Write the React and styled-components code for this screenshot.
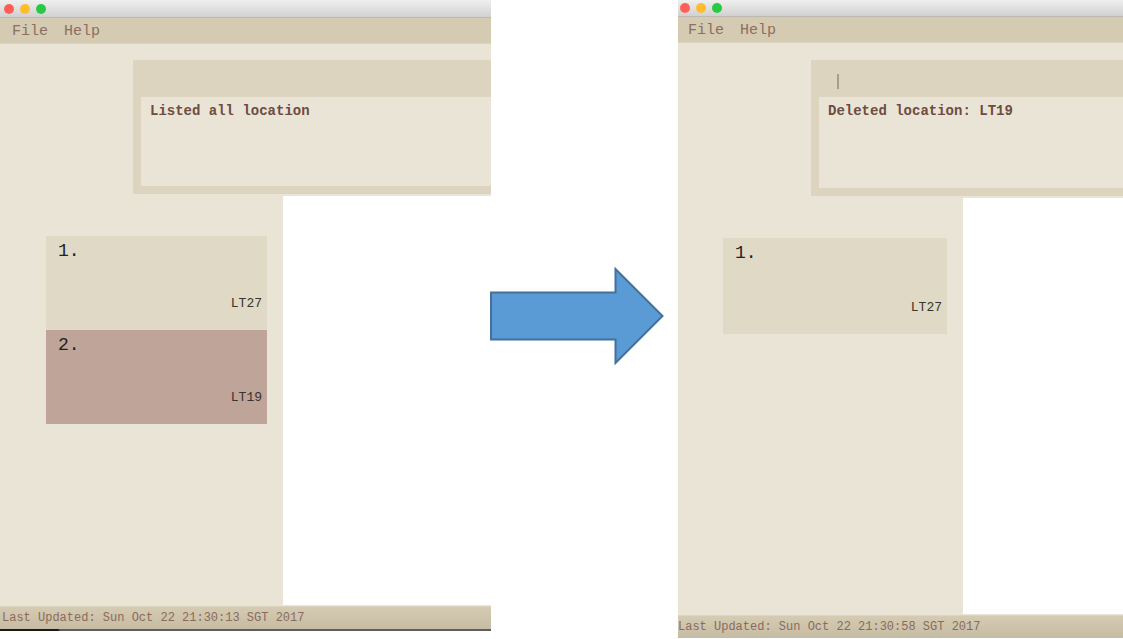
import React from "react";
import styled, { createGlobalStyle } from "styled-components";

const GlobalStyle = createGlobalStyle`
  * { box-sizing: border-box; }
  body {
    margin: 0;
    background: #ffffff;
    font-family: "Liberation Mono", "Courier New", monospace;
  }
  button, input { font: inherit; color: inherit; }
`;

const Page = styled.main`
  display: grid;
  grid-template-columns: minmax(0, 491fr) minmax(0, 187fr) minmax(0, 445fr);
  min-height: 100vh;
`;

const Window = styled.section`
  display: flex;
  flex-direction: column;
  min-width: 0;
  overflow: hidden;
  margin-bottom: ${(p) => p.$gapBelow}px;
  background: #eae4d6;
`;

const TitleBar = styled.header`
  display: flex;
  align-items: center;
  gap: 6px;
  height: ${(p) => p.$height}px;
  padding-left: ${(p) => p.$inset}px;
  background: linear-gradient(#efefef, #d1d1d1);
  border-bottom: 1px solid #bdb9b1;
`;

const Light = styled.button`
  width: 10px;
  height: 10px;
  padding: 0;
  border: 0;
  border-radius: 50%;
  background: ${(p) => p.$color};
`;

const MenuBar = styled.nav`
  display: flex;
  gap: 16px;
  padding: 5px ${(p) => p.$inset}px 2px;
  background: #d5cab2;
  border-bottom: 1px solid #dcd3bf;
`;

const MenuItem = styled.button`
  padding: 0;
  border: 0;
  background: none;
  font-size: 15px;
  line-height: 18px;
  color: #8d6f60;
`;

const CommandPanel = styled.div`
  margin: ${(p) => p.$top}px 0 2px 133px;
  padding: 0 0 8px 8px;
  background: #dcd4bf;
`;

const CommandRow = styled.label`
  display: flex;
  align-items: center;
  height: 37px;
  padding: 6px 0 0 18px;
`;

const Caret = styled.span`
  width: 2px;
  height: 15px;
  background: #b09a8a;
`;

const CommandInput = styled.input`
  flex: 1;
  min-width: 0;
  padding: 0;
  border: 0;
  outline: 0;
  background: transparent;
  font-size: 14px;
  line-height: 16px;
  color: #6d4c41;
`;

const Result = styled.output`
  display: block;
  min-height: ${(p) => p.$height}px;
  padding: 5px 9px;
  background: #eae4d6;
  font-size: 14px;
  font-weight: 700;
  line-height: 18px;
  white-space: nowrap;
  color: #6d4c41;
`;

const Body = styled.div`
  display: flex;
  flex: 1;
`;

const Sidebar = styled.aside`
  flex: none;
  width: ${(p) => p.$width}px;
  padding: 40px 16px 0 ${(p) => p.$inset}px;
`;

const Browser = styled.div`
  flex: 1;
  margin-bottom: 1px;
  background: #ffffff;
`;

const LocationList = styled.ol`
  margin: 0;
  padding: 0;
  list-style: none;
`;

const LocationCard = styled.li`
  display: flex;
  flex-direction: column;
  justify-content: space-between;
  min-height: ${(p) => p.$height}px;
  padding: 3px 5px 18px 12px;
  background: ${(p) => (p.$selected ? "#bea499" : "#e0d9c6")};
`;

const Index = styled.span`
  font-size: 18px;
  line-height: 24px;
  color: #24211f;
`;

const Venue = styled.span`
  align-self: flex-end;
  font-size: 13px;
  line-height: 16px;
  color: #38342f;
`;

const StatusBar = styled.footer`
  padding: 3px 0 3px ${(p) => p.$inset}px;
  background: linear-gradient(#d5cbb2, #c6bca4);
  border-top: 1px solid #ddd4c0;
  font-size: 12px;
  line-height: 16px;
  white-space: nowrap;
  color: #8a6b5b;
`;

const DesktopEdge = styled.div`
  height: 2px;
  background: linear-gradient(90deg, #1c1917 58px, #615c5f 60px);
`;

const ArrowColumn = styled.div`
  display: flex;
  align-items: center;
  padding-bottom: 8px;
`;

const Arrow = styled.svg`
  position: relative;
  z-index: 1;
  flex: none;
  width: 174px;
  height: 98px;
  margin-left: -1px;
`;

const lights = [
  { name: "Close", color: "#ff5f57" },
  { name: "Minimize", color: "#ffbd2e" },
  { name: "Zoom", color: "#28ca41" },
];

function AppWindow({ label, layout, typing, result, locations, updated, edge }) {
  return (
    <Window aria-label={label} $gapBelow={layout.gapBelow}>
      <TitleBar $height={layout.title} $inset={layout.lights}>
        {lights.map((l) => (
          <Light key={l.name} type="button" aria-label={l.name} $color={l.color} />
        ))}
      </TitleBar>
      <MenuBar $inset={layout.menu}>
        <MenuItem type="button">File</MenuItem>
        <MenuItem type="button">Help</MenuItem>
      </MenuBar>
      <CommandPanel $top={layout.panelTop}>
        <CommandRow>
          {typing && <Caret />}
          <CommandInput type="text" aria-label="Command" />
        </CommandRow>
        <Result $height={layout.result}>{result}</Result>
      </CommandPanel>
      <Body>
        <Sidebar $width={layout.sidebar} $inset={layout.listInset}>
          <LocationList>
            {locations.map((l, i) => (
              <LocationCard key={l.venue} $height={layout.card} $selected={l.selected}>
                <Index>{i + 1}.</Index>
                <Venue>{l.venue}</Venue>
              </LocationCard>
            ))}
          </LocationList>
        </Sidebar>
        <Browser />
      </Body>
      <StatusBar $inset={layout.status}>Last Updated: {updated}</StatusBar>
      {edge && <DesktopEdge />}
    </Window>
  );
}

const before = {
  gapBelow: 8,
  title: 18,
  lights: 4,
  menu: 12,
  panelTop: 16,
  result: 89,
  sidebar: 283,
  listInset: 46,
  card: 94,
  status: 2,
};

const after = {
  gapBelow: 1,
  title: 17,
  lights: 2,
  menu: 10,
  panelTop: 17,
  result: 91,
  sidebar: 285,
  listInset: 45,
  card: 96,
  status: 0,
};

export default function App() {
  return (
    <>
      <GlobalStyle />
      <Page>
        <AppWindow
          label="Before"
          layout={before}
          result="Listed all location"
          locations={[{ venue: "LT27" }, { venue: "LT19", selected: true }]}
          updated="Sun Oct 22 21:30:13 SGT 2017"
          edge
        />
        <ArrowColumn>
          <Arrow viewBox="0 0 174 98" aria-hidden="true">
            <path
              d="M1 25.5H125.5V2L172.5 49L125.5 96V72.5H1Z"
              fill="#5b9bd5"
              stroke="#41719c"
              strokeWidth="2"
            />
          </Arrow>
        </ArrowColumn>
        <AppWindow
          label="After"
          layout={after}
          typing
          result="Deleted location: LT19"
          locations={[{ venue: "LT27" }]}
          updated="Sun Oct 22 21:30:58 SGT 2017"
        />
      </Page>
    </>
  );
}
